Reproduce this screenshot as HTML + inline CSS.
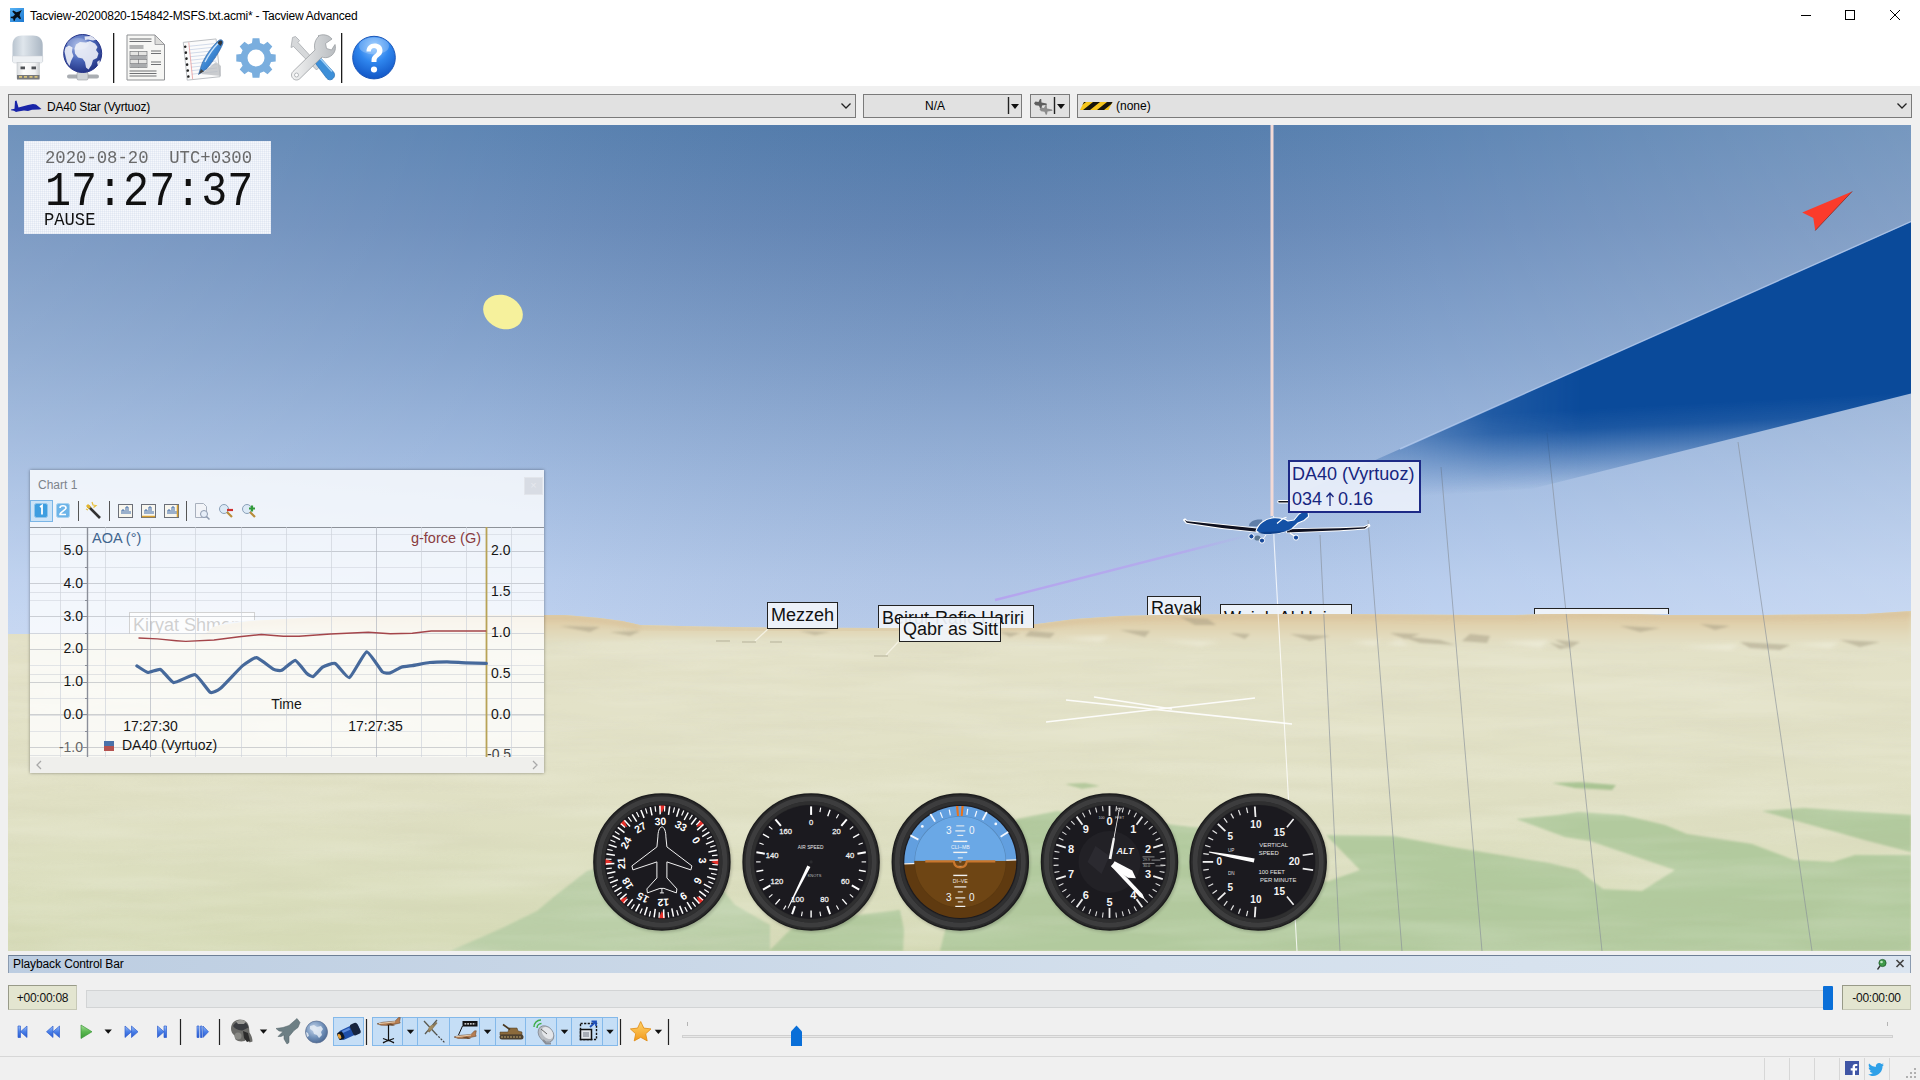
<!DOCTYPE html>
<html>
<head>
<meta charset="utf-8">
<title>Tacview</title>
<style>
*{box-sizing:border-box;margin:0;padding:0}
html,body{width:1920px;height:1080px;overflow:hidden;background:#f0f0f0;font-family:"Liberation Sans",sans-serif;color:#000}
body{position:relative}
.abs{position:absolute}
#titlebar{position:absolute;left:0;top:0;width:1920px;height:30px;background:#fff}
#title{position:absolute;left:30px;top:9px;font-size:12px;line-height:14px;white-space:nowrap;color:#000;letter-spacing:-.22px}
#toolbar{position:absolute;left:0;top:30px;width:1920px;height:56px;background:#fff}
.tsep{position:absolute;top:3px;width:1px;height:50px;background:#2a2a2a}
#combos{position:absolute;left:0;top:86px;width:1920px;height:39px;background:#f0f0f0}
.combo{position:absolute;top:8px;height:24px;border:1px solid #7a7a7a;background:#e1e1e1;font-size:12px;line-height:22px;white-space:nowrap}
#view{position:absolute;left:8px;top:125px;width:1903px;height:826px;overflow:hidden;background:#89a8d2}
#view>svg{position:absolute;left:0;top:0}
.lbl{position:absolute;border:1px solid #222;background:rgba(240,244,250,.93);color:#111;font-size:18px;line-height:22px;white-space:nowrap;padding:0 3px;overflow:hidden}
#timebox{position:absolute;left:24px;top:141px;width:247px;height:93px;background:#f6f8fc;overflow:hidden}
#chart{position:absolute;left:30px;top:470px;width:514px;height:303px;background:rgba(255,255,255,.8);box-shadow:0 0 3px rgba(0,0,0,.4);overflow:hidden}
.mono{font-family:"Liberation Mono",monospace;white-space:nowrap;transform-origin:0 0}
.cl{position:absolute;font-size:14px;line-height:16px;white-space:nowrap;color:#151515}
#pbhead{position:absolute;left:8px;top:955px;width:1903px;height:18px;background:linear-gradient(90deg,#bccde1,#d3dfec 60%,#dbe5f0);border-top:1px solid #6d7f96;border-left:1px solid #8b9bb0;border-right:1px solid #8b9bb0;font-size:12px;line-height:16px;padding-left:4px;letter-spacing:-.1px}
.tbox{position:absolute;top:985px;height:25px;background:#e3e5d0;border:1px solid;border-color:#989a88 #c6c8b6 #c6c8b6 #989a88;font-size:12px;line-height:25px;text-align:center;color:#111;letter-spacing:-.25px}
#track{position:absolute;left:86px;top:990px;width:1741px;height:18px;background:#e5e7e8;border:1px solid #d2d4d5}
#status{position:absolute;left:0;top:1056px;width:1920px;height:24px;background:#f0f0f0;border-top:1px solid #d7d7d7}
</style>
</head>
<body>
<div id="titlebar">
  <svg class="abs" style="left:10px;top:8px" width="14" height="14" viewBox="0 0 14 14"><defs><linearGradient id="ai" x1="0" y1="0" x2="1" y2="1"><stop offset="0" stop-color="#58b4f6"/><stop offset="1" stop-color="#1c78d0"/></linearGradient></defs><rect width="14" height="14" fill="url(#ai)"/><path d="M11.9 2 L9 3.4 L6.5 4.2 L3.2 2.6 L2.3 3.6 L5 6.5 L3 8.5 L.8 8.7 L.8 10.1 L3.2 10.5 L3.6 12.7 L4.900 12.7 L5.3 10.7 L7.3 8.900 L10 11.2 L11 10.5 L9.6 7.3 L10.4 4.800Z" fill="#061018"/></svg>
  <div id="title">Tacview-20200820-154842-MSFS.txt.acmi* - Tacview Advanced</div>
  <svg class="abs" style="left:1790px;top:0" width="130" height="30" viewBox="0 0 130 30" fill="none" stroke="#000" stroke-width="1"><path d="M11 15.5h10"/><rect x="55.5" y="10.5" width="9" height="9"/><path d="M100 10l10 10M110 10l-10 10"/></svg>
</div>
<div id="toolbar"><svg class="abs" style="left:0;top:0" width="420" height="56" viewBox="0 30 420 56">
<defs>
<linearGradient id="usbc" x1="0" y1="0" x2="1" y2="0"><stop offset="0" stop-color="#b9c4cf"/><stop offset=".35" stop-color="#dfe6ec"/><stop offset="1" stop-color="#aab6c3"/></linearGradient>
<linearGradient id="usbb" x1="0" y1="0" x2="1" y2="0"><stop offset="0" stop-color="#d9dcdf"/><stop offset=".3" stop-color="#fdfdfd"/><stop offset=".8" stop-color="#f0f1f2"/><stop offset="1" stop-color="#c8cbce"/></linearGradient>
<radialGradient id="glb" cx=".4" cy=".3" r=".75"><stop offset="0" stop-color="#9fb3e6"/><stop offset=".5" stop-color="#4a66b8"/><stop offset="1" stop-color="#1f2f80"/></radialGradient>
<radialGradient id="hlp" cx=".5" cy=".25" r=".8"><stop offset="0" stop-color="#8cc4ff"/><stop offset=".45" stop-color="#2f86ee"/><stop offset="1" stop-color="#0d4fc0"/></radialGradient>
<linearGradient id="pen" x1="0" y1="0" x2="1" y2="1"><stop offset="0" stop-color="#8fc6f2"/><stop offset=".5" stop-color="#3c86d2"/><stop offset="1" stop-color="#1d5aa6"/></linearGradient>
<linearGradient id="wr" x1="0" y1="0" x2="1" y2="0"><stop offset="0" stop-color="#f4f4f4"/><stop offset="1" stop-color="#b8bcc0"/></linearGradient>
</defs>
<!-- usb -->
<path d="M12.5 61.5 V45 C12.5 38.5 16.5 35.5 22 35.5 H33 C38.5 35.5 42.7 38.5 42.7 45 V61.5Z" fill="url(#usbc)"/>
<path d="M12.5 56 H42.7 V61 C42.7 62.5 41.5 63 40 63 H15 C13.5 63 12.5 62.5 12.5 61Z" fill="#eef1f4" stroke="#c9ced4" stroke-width=".5"/>
<rect x="17" y="62.5" width="22.5" height="16" fill="url(#usbb)" stroke="#c4c8cc" stroke-width=".6"/>
<rect x="20.5" y="66.5" width="4.5" height="2.8" fill="#4f5256"/><rect x="31.5" y="66.5" width="4.5" height="2.8" fill="#4f5256"/>
<rect x="17" y="75" width="22.5" height="4.5" fill="#77797c"/><path d="M19 76.8h3M24 76.8h3M29.5 76.8h3M34.5 76.8h3" stroke="#d8c27a" stroke-width="1.8"/>
<!-- globe -->
<path d="M79 78 v-6 h7 v6 M69 76.5 h28" stroke="#a9adb2" stroke-width="4" fill="none" stroke-linecap="round"/>
<rect x="77" y="72" width="11" height="8" rx="1.5" fill="#cfd3d7" stroke="#9a9ea3" stroke-width=".6"/>
<circle cx="82.7" cy="53.5" r="19" fill="url(#glb)" stroke="#27358a" stroke-width="1"/>
<path d="M76 44.5 L80 42 L86 42.5 L90 41 L95 43.5 L97.5 47 L96 50 L98.5 53.5 L97 58 L93 60 L91.5 65 L88.5 69.5 L86 67.5 L85 62 L82.5 58.5 L78 57.5 L75 53.5 L74.5 48.5Z M84.5 36.5 L91 36 L96.5 39.5 L93 40.5 L88 39.5 L85 40Z M65.5 47.5 L69 45.5 L72.5 47.5 L72 52 L73.5 56 L71 61 L69.5 66 L67 62 L65.5 56 L64.5 51.5Z M97 62 L99.5 60 L100 64 L98 66Z" fill="#eef1f8" opacity=".9"/>
<ellipse cx="78" cy="44" rx="11" ry="6" fill="#fff" opacity=".18"/>
<!-- sep -->
<rect x="113" y="33" width="1.3" height="50" fill="#1c1c1c"/><rect x="341" y="33" width="1.3" height="50" fill="#1c1c1c"/>
<!-- doc -->
<path d="M127 35 H155 L164.5 44.5 V80 H127Z" fill="#f6f6f4" stroke="#8f9194" stroke-width="1"/>
<path d="M155 35 V44.5 H164.5Z" fill="#dcdcda" stroke="#8f9194" stroke-width=".8"/>
<g stroke="#6e7073" stroke-width="1.1"><path d="M129.5 39h22M129.5 41.5h22M129.5 46h14M129.5 48h14M129.5 71h27M129.5 73.5h27M129.5 76h27M151 51h10M151 53.5h10M151 62h10M151 64.5h10"/></g>
<rect x="130" y="51.5" width="17" height="16" fill="#e4e4e2" stroke="#77797c" stroke-width=".7"/><path d="M130 55.5h17M130 59.5h17M130 63.5h17M138.5 51.5v16" stroke="#77797c" stroke-width=".7"/>
<rect x="130.5" y="56" width="16" height="3" fill="#a9abad"/><rect x="130.5" y="64" width="16" height="3" fill="#a9abad"/>
<!-- notepad -->
<g transform="rotate(-6 202 58)">
<rect x="185" y="40.5" width="33" height="38" fill="#fbfbfb" stroke="#b9bcc0" stroke-width=".9"/>
<path d="M190 45h26M190 48.5h26M190 52h26M190 55.5h26M190 59h26M190 62.5h26M190 66h26M190 69.5h26M190 73h26" stroke="#c9d4e6" stroke-width=".8"/>
<path d="M190.5 41v37" stroke="#e9a0a0" stroke-width=".8"/>
<g fill="#222"><circle cx="186.5" cy="45" r="1.3"/><circle cx="186.5" cy="51" r="1.3"/><circle cx="186.5" cy="57" r="1.3"/><circle cx="186.5" cy="63" r="1.3"/><circle cx="186.5" cy="69" r="1.3"/><circle cx="186.5" cy="75" r="1.3"/></g>
</g>
<path d="M201 74 L216 62 L221 66 L221 76 Z" fill="#b9bcc0" opacity=".75"/>
<path d="M198.5 74.5 L202 63.5 C207 53 213.5 45 218.5 40.5 C221 38.5 224 40.5 222.8 43.8 C220 51 214 60 207 68.5Z" fill="url(#pen)" stroke="#2b5e9e" stroke-width=".6"/><path d="M205 62 C209 54 214 47.5 218.5 43" stroke="#cfe6fa" stroke-width="1.3" fill="none"/>
<path d="M219 41 C221 39.5 223 41 222 43.5 L220.5 46 L217.5 43Z" fill="#33363b"/>
<path d="M199 74 l2 -5 l3 2.5z" fill="#444"/>
<!-- gear -->
<path d="M252.0 43.0 L252.6 38.3 L259.4 38.3 L260.0 43.0 L263.8 44.6 L267.5 41.7 L272.3 46.5 L269.4 50.2 L271.0 54.0 L275.7 54.6 L275.7 61.4 L271.0 62.0 L269.4 65.8 L272.3 69.5 L267.5 74.3 L263.8 71.4 L260.0 73.0 L259.4 77.7 L252.6 77.7 L252.0 73.0 L248.2 71.4 L244.5 74.3 L239.7 69.5 L242.6 65.8 L241.0 62.0 L236.3 61.4 L236.3 54.6 L241.0 54.0 L242.6 50.2 L239.7 46.5 L244.5 41.7 L248.2 44.6Z M247.5 58.0 a8.5 8.5 0 1 0 17.0 0 a8.5 8.5 0 1 0 -17.0 0Z" fill="#7aaede" fill-rule="evenodd"/>
<!-- tools -->
<path d="M292.5 37.5 l3 -1 l4 4 l-1.5 2 l22 24 l-3.5 3.5 l-23 -23.5 l-2.5 1 z" fill="#d6d8da" stroke="#9fa3a7" stroke-width=".7"/>
<path d="M313 60 l5 -5 l15.5 17 c2 2.5 1 5.5 -1 7 c-2 1.5 -4.5 1 -6 -1z" fill="#3d8fd8" stroke="#2a6fb0" stroke-width=".7"/>
<path d="M316 58 l2 -2 l14 15.5" stroke="#9ccdf5" stroke-width="1.5" fill="none"/>
<path d="M318 36 c5 -2.5 11 -1 14 3 l-6.5 4.5 l1 5 l5 1.5 l3.5 -5.5 c1.5 5 -1 10.5 -6 12.5 c-2.5 1 -5 .8 -7 0 l-22 21.5 c-2 2 -5 2 -7 0 c-2 -2 -2 -5 0 -7 l22 -21.5 c-1.5 -5.5 .5 -11 4 -14z" fill="url(#wr)" stroke="#9a9ea2" stroke-width=".8"/>
<circle cx="296.5" cy="75" r="2" fill="#fff" stroke="#9a9ea2" stroke-width=".7"/>
<!-- help -->
<circle cx="374" cy="57.6" r="21.3" fill="url(#hlp)" stroke="#1a56b8" stroke-width="1"/>
<ellipse cx="374" cy="46" rx="15" ry="8.5" fill="#fff" opacity=".22"/>
<path d="M366.5 51.5 c0 -5 3.5 -8 8 -8 c4.5 0 8 2.5 8 7 c0 3.5 -2 5 -4 6.5 c-1.5 1.200 -2 2 -2 4 v1 h-5 v-1.5 c0 -3 1 -4.5 3 -6 c1.5 -1.200 2.5 -2 2.5 -3.800 c0 -1.800 -1.200 -2.800 -3 -2.800 c-2 0 -3 1.3 -3.200 3.6z" fill="#fff"/>
<ellipse cx="374" cy="69.5" rx="3.1" ry="3" fill="#fff"/>
</svg>
</div>
<div id="combos"><div class="combo" style="left:8px;width:848px"></div>
<svg class="abs" style="left:8px;top:9px" width="36" height="20" viewBox="0 0 36 20"><path d="M3 14.5 L6.5 13.800 L7 6 L8.5 5.5 L10.5 12.5 L20 10 L25 9 L28 9.5 L33.5 14 L31 14.5 L24 14.800 L20 16 L16 15.5 L10 16.5 L8 17 L6 15.800 L3 15.3Z" fill="#1824a8"/></svg>
<div class="abs" style="left:47px;top:14px;font-size:12px;line-height:14px;white-space:nowrap;letter-spacing:-.2px">DA40 Star (Vyrtuoz)</div>
<svg class="abs" style="left:840px;top:16px" width="12" height="8" viewBox="0 0 12 8"><path d="M1.5 1.5l4.5 4.5 4.5-4.5" fill="none" stroke="#222" stroke-width="1.3"/></svg>
<div class="combo" style="left:863px;width:159px"></div>
<div class="abs" style="left:863px;top:13px;width:144px;text-align:center;font-size:12px;line-height:14px">N/A</div>
<svg class="abs" style="left:1004px;top:10px" width="18" height="20" viewBox="0 0 18 20"><path d="M4.5 1v17" stroke="#222" stroke-width="1.4"/><path d="M7 8h8l-4 5z" fill="#111"/></svg>
<div class="combo" style="left:1030px;width:40px"></div>
<svg class="abs" style="left:1032px;top:10px" width="38" height="20" viewBox="0 0 38 20"><path d="M3.5 5.5l3 .5 1.5-3 1.2 0 .3 3.5 5 1 .5 1.2-5 .8-.5 3-1.2.2-1.300-3-3.5-.5-1.5-2z" fill="#5e5e5e"/><path d="M9 11.5l3 .5 1.5-3 1.2 0 .3 3.5 5 1 .5 1.2-5 .8-.5 3-1.2.2-1.300-3-3.5-.5-1.5-2z" fill="#8c8c8c"/><path d="M22.5 1v17" stroke="#222" stroke-width="1.4"/><path d="M25 8h8l-4 5z" fill="#111"/></svg>
<div class="combo" style="left:1077px;width:835px"></div>
<svg class="abs" style="left:1078px;top:14px" width="38" height="12" viewBox="1078 100 38 12"><clipPath id="hz"><path d="M1084 102h28.5l-4 8h-28.5z"/></clipPath><g clip-path="url(#hz)"><rect x="1078" y="100" width="38" height="12" fill="#f4c41c"/><path d="M1093 102h7l-10 8h-7zM1107 102h7l-10 8h-7zM1079 102h7l-10 8h-7z" fill="#16140c"/></g></svg>
<div class="abs" style="left:1116px;top:13px;font-size:12px;line-height:14px">(none)</div>
<svg class="abs" style="left:1896px;top:16px" width="12" height="8" viewBox="0 0 12 8"><path d="M1.5 1.5l4.5 4.5 4.5-4.5" fill="none" stroke="#222" stroke-width="1.3"/></svg>
</div>
<div id="view"><svg width="1903" height="826" viewBox="8 125 1903 826">
<defs>
<linearGradient id="sky" x1="0" y1="125" x2="0" y2="630" gradientUnits="userSpaceOnUse">
<stop offset="0" stop-color="#547eaf"/><stop offset=".2" stop-color="#6689b9"/><stop offset=".45" stop-color="#7f9fcb"/><stop offset=".7" stop-color="#9db8df"/><stop offset=".9" stop-color="#b4caec"/><stop offset="1" stop-color="#bcd0f0"/>
</linearGradient>
<linearGradient id="skyh" x1="8" y1="0" x2="1911" y2="0" gradientUnits="userSpaceOnUse">
<stop offset="0" stop-color="#fff" stop-opacity=".16"/><stop offset=".25" stop-color="#fff" stop-opacity=".06"/><stop offset=".5" stop-color="#000" stop-opacity=".03"/><stop offset=".75" stop-color="#fff" stop-opacity=".06"/><stop offset="1" stop-color="#fff" stop-opacity=".2"/>
</linearGradient>
<linearGradient id="gnd" x1="0" y1="610" x2="0" y2="951" gradientUnits="userSpaceOnUse">
<stop offset="0" stop-color="#e0dabd"/><stop offset=".09" stop-color="#e3e1c7"/><stop offset=".3" stop-color="#e3e2c8"/><stop offset=".55" stop-color="#e0e0c4"/><stop offset=".8" stop-color="#dbdebe"/><stop offset="1" stop-color="#d5dab6"/>
</linearGradient>
<linearGradient id="mtn" x1="0" y1="612" x2="0" y2="654" gradientUnits="userSpaceOnUse">
<stop offset="0" stop-color="#dfc9a2"/><stop offset=".3" stop-color="#e0d1ad"/><stop offset=".65" stop-color="#e2dbbe" stop-opacity=".7"/><stop offset="1" stop-color="#e3e1c7" stop-opacity="0"/>
</linearGradient>
<linearGradient id="trail" x1="1533" y1="412" x2="1537" y2="490" gradientUnits="userSpaceOnUse">
<stop offset="0" stop-color="#0a4a9a"/><stop offset=".25" stop-color="#0a4a9a" stop-opacity=".88"/><stop offset=".6" stop-color="#0a4a9a" stop-opacity=".45"/><stop offset="1" stop-color="#0a4a9a" stop-opacity="0"/>
</linearGradient>
<filter id="tex" x="0" y="0" width="100%" height="100%"><feTurbulence type="fractalNoise" baseFrequency="0.006 0.06" numOctaves="3" seed="7"/><feColorMatrix type="matrix" values="0 0 0 0 0.45  0 0 0 0 0.42  0 0 0 0 0.30  1.6 0 0 0 -0.62"/></filter>
<filter id="tex2" x="0" y="0" width="100%" height="100%"><feTurbulence type="fractalNoise" baseFrequency="0.005 0.05" numOctaves="3" seed="23"/><feColorMatrix type="matrix" values="0 0 0 0 1  0 0 0 0 1  0 0 0 0 0.95  0 1.6 0 0 -0.62"/></filter>
<filter id="b2"><feGaussianBlur stdDeviation="2"/></filter>
<filter id="b4" x="-5%" y="-100%" width="110%" height="300%"><feGaussianBlur stdDeviation="6"/></filter>
<filter id="b1"><feGaussianBlur stdDeviation="0.8"/></filter>
</defs>
<rect x="8" y="125" width="1903" height="520" fill="url(#sky)"/>
<rect x="8" y="125" width="1903" height="520" fill="url(#skyh)"/>
<!-- ground -->
<clipPath id="gclip"><path d="M8 634 L200 634 L215 626 L250 621 L320 617 L420 615 L540 615 L565 615 L600 618 L622 621 L640 625 L700 626.5 L765 627.5 L877 628 L950 627 L1000 625 L1037 624 L1075 619 L1120 616 L1160 615 L1200 614.5 L1250 614 L1350 614 L1475 615 L1515 615 L1590 612.5 L1665 615 L1765 615 L1865 614 L1911 611 V951 H8Z"/></clipPath>
<path d="M8 634 L200 634 L215 626 L250 621 L320 617 L420 615 L540 615 L565 615 L600 618 L622 621 L640 625 L700 626.5 L765 627.5 L877 628 L950 627 L1000 625 L1037 624 L1075 619 L1120 616 L1160 615 L1200 614.5 L1250 614 L1350 614 L1475 615 L1515 615 L1590 612.5 L1665 615 L1765 615 L1865 614 L1911 611 V951 H8Z" fill="url(#gnd)"/>
<g filter="url(#b1)" fill="#b2ca9e">
<path d="M450 951 L500 929 L537 911 L556 895 L587 871 L620 862 L700 862 L735 905 L770 925 L770 951Z" fill="#bbcfa8"/>
<path d="M769 951 L790 930 L806 923 L850 916 L900 910 L904 930 L903 951Z"/>
<path d="M940 951 L955 890 L985 850 L1017 819 L1057 811 L1191 827 L1300 832 L1300 884 L1329 881 L1360 870 L1326 835 L1394 836 L1452 847 L1549 863 L1578 870 L1603 889 L1642 891 L1675 870 L1590 841 L1565 837 L1516 819 L1558 815 L1578 812 L1623 815 L1665 825 L1687 834 L1752 844 L1794 860 L1833 862 L1855 855 L1911 855 L1911 951Z"/>
<path d="M1762 811 L1804 808 L1911 815 L1911 852 L1868 841Z"/>
<path d="M1552 783 L1580 782 L1616 785 L1612 790 L1575 788Z" fill="#a9c493"/>
<path d="M1065 784 L1085 783 L1100 786 L1082 789Z" fill="#b4c99c"/>
</g>

<g clip-path="url(#gclip)"><rect x="8" y="640" width="1903" height="311" filter="url(#tex)" opacity=".09"/><rect x="8" y="640" width="1903" height="311" filter="url(#tex2)" opacity=".2"/></g>
<g clip-path="url(#gclip)">
<path d="M200 634 L215 626 L250 621 L320 617 L420 615 L540 615 L565 615 L600 618 L622 621 L640 625 L700 626.5 L765 627.5 L877 628 L950 627 L1000 625 L1037 624 L1075 619 L1120 616 L1160 615 L1200 614.5 L1250 614 L1350 614 L1475 615 L1515 615 L1590 612.5 L1665 615 L1765 615 L1865 614 L1911 611 L1911 654 L1700 654 L1500 652 L1300 650 L1150 648 L1075 644 L1000 639 L950 637 L800 637 L660 637 L620 640 L540 641 L420 641 L320 641 L250 640 L215 638 L200 636Z" fill="url(#mtn)" filter="url(#b2)"/>
<g filter="url(#b2)" fill="none" stroke="#d9c29b" stroke-width="6" opacity=".75"><path d="M200 636 L215 628 L250 623 L320 619 L420 617 L540 617 L565 617 L600 620 L622 623 L640 627"/><path d="M1000 627 L1037 626 L1075 621 L1120 618 L1160 617 L1200 616.5 L1250 616 L1350 616 L1475 617 L1515 617 L1590 614.5 L1665 617 L1765 617 L1865 616 L1911 613"/></g>
<g filter="url(#b2)" fill="none" stroke="#dbc7a2" stroke-width="5" opacity=".75"><path d="M622 622.5 L640 626.5 L700 628 L765 629 L877 629.5 L950 628.5 L1000 626.5 L1037 625.5"/></g>
<g filter="url(#b1)" fill="#9f967e" opacity=".45">
<path d="M1180 617 L1208 619 L1216 625 L1195 625Z"/><path d="M1030 631 L1055 633 L1050 638 L1025 636Z"/>
<path d="M1120 630 L1150 631 L1145 637Z"/><path d="M1230 633 L1250 634 L1245 639Z"/><path d="M1290 634 L1330 636 L1310 641Z"/>
<path d="M1390 633 L1420 634 L1405 639Z"/><path d="M1470 634 L1490 636 L1487 643 L1462 641Z"/><path d="M1555 640 L1580 642 L1570 648Z"/>
<path d="M1620 626 L1660 628 L1640 632Z"/><path d="M1700 624 L1730 626 L1715 630Z"/><path d="M1740 642 L1790 645 L1780 650 L1750 648Z"/><path d="M1840 640 L1880 642 L1860 647Z"/>
<path d="M560 626 L600 627 L590 632Z"/><path d="M610 632 L640 631 L630 636Z"/><path d="M800 631 L830 632 L815 635Z"/><path d="M1000 632 L1020 633 L1010 637Z"/>
<path d="M1400 636 L1440 640 L1455 645 L1420 643Z"/><path d="M1550 643 L1570 647 L1560 649Z"/>
</g>
<g filter="url(#b2)" fill="#f0efdd" opacity=".7">
<path d="M1060 638 L1110 636 L1100 642Z"/><path d="M1160 640 L1220 642 L1200 646Z"/><path d="M1350 642 L1380 640 L1375 646Z"/><path d="M1500 642 L1550 640 L1540 648Z"/><path d="M1680 646 L1740 644 L1730 650Z"/><path d="M1790 644 L1840 642 L1830 648Z"/><path d="M1385 644 L1400 640 L1410 646Z"/>
</g>
</g>
<g>
<g stroke="#868e98" stroke-width="1" opacity=".62" fill="none">
<path d="M1320 535 L1340 951"/><path d="M1368 520 L1402 951"/><path d="M1441 467 L1482 951"/><path d="M1547 433 L1602 951"/><path d="M1738 442 L1812 951"/>
</g>
<linearGradient id="tmg" x1="1290" y1="0" x2="1580" y2="0" gradientUnits="userSpaceOnUse"><stop offset="0" stop-color="#fff" stop-opacity=".2"/><stop offset=".4" stop-color="#fff" stop-opacity=".5"/><stop offset=".7" stop-color="#fff" stop-opacity=".85"/><stop offset="1" stop-color="#fff" stop-opacity="1"/></linearGradient><mask id="tm" maskUnits="userSpaceOnUse" x="1280" y="200" width="640" height="320"><rect x="1280" y="200" width="640" height="320" fill="url(#tmg)"/></mask>
<path d="M1290 498 L1911 222 L1911 393.5 L1533 488.5 L1290 505Z" fill="url(#trail)" mask="url(#tm)"/>
</g>
<ellipse cx="503" cy="312" rx="20.5" ry="16.5" transform="rotate(25 503 312)" fill="#f6f19c"/>
<path d="M1802.2 212.6 L1852.2 191.4 L1815.2 230.6 L1813.3 218.1Z" fill="#fb3b2b"/>
<path d="M1852.2 191.4 L1815.2 230.6" stroke="#7a2a24" stroke-width=".9" opacity=".8"/>
<path d="M1400 449 L1911 221.6" stroke="#b7cdf0" stroke-width="1.4" opacity=".75"/>
<rect x="1270.5" y="125" width="3" height="391" fill="#f3dad6"/>
<path d="M1273.6 516 L1274 540 L1297 951" stroke="#fff" stroke-width="1.1" opacity=".8" fill="none"/>
<linearGradient id="vio" x1="995" y1="0" x2="1250" y2="0" gradientUnits="userSpaceOnUse"><stop offset="0" stop-color="#b5a3ef" stop-opacity=".95"/><stop offset=".75" stop-color="#b5a3ef" stop-opacity=".7"/><stop offset="1" stop-color="#b5a3ef" stop-opacity="0"/></linearGradient>
<path d="M1250 535 L995 600" stroke="url(#vio)" stroke-width="2.4"/>
<g id="aircraft">
<path d="M1279 501.7 L1290 501.7" stroke="#fff" stroke-width="3.4" stroke-linecap="round"/><path d="M1279 501.7 L1290 501.7" stroke="#15161c" stroke-width="1.6" stroke-linecap="round"/>
<path d="M1183.8 520 L1185 519.2 L1187 521 L1257 528.6 L1257 531.8 L1222 528.2 L1186.5 523Z" fill="#fff" stroke="#fff" stroke-width="1.6" stroke-linejoin="round"/>
<path d="M1184.5 519.8 L1187 521.2 L1257 528.6 L1257 531.8 L1222 528 L1186.8 522.8Z" fill="#0e1020"/>
<path d="M1287 529.2 L1340 528 L1364 527 L1369 524.6 L1369.6 525.8 L1365 528.6 L1340 530.4 L1287 532.4Z" fill="#fff" stroke="#fff" stroke-width="1.6" stroke-linejoin="round"/>
<path d="M1287 529.2 L1340 528.2 L1364 527.2 L1368.6 525.2 L1365 528.6 L1340 530.2 L1287 532.4Z" fill="#0e1020"/>
<path d="M1249 526 C1249.5 521.5 1254 519 1262 519.5 L1264 527Z" fill="#5f7ea8"/>
<path d="M1256 531 C1258 524 1265 518.4 1274 517.8 C1280 517.6 1285 519 1288 521 L1294 520 L1299 514 L1303 511.6 L1308 511.8 L1308.6 516.5 L1304 520.5 L1298 523 L1292 528.6 C1284 534 1262 535.6 1256 531Z" fill="#1351a6" stroke="#fff" stroke-width="1.1" stroke-linejoin="round"/>
<path d="M1277 523.5 L1283 518.6 L1286.5 517.2" stroke="#fff" stroke-width="1.2" fill="none"/>
<path d="M1262 532 L1286 531 L1292 528.6 C1284 534 1264 535.6 1258 532.6Z" fill="#0c3f8a"/>
<ellipse cx="1257.5" cy="538" rx="3" ry="2.6" fill="#5c7792"/>
<circle cx="1251.4" cy="536.4" r="2.6" fill="#17499a" stroke="#fff" stroke-width="1"/>
<circle cx="1262" cy="540.6" r="2.6" fill="#17499a" stroke="#fff" stroke-width="1"/>
<path d="M1290 533 L1295 536.5" stroke="#fff" stroke-width="1.2"/><path d="M1266 535 L1263 539" stroke="#fff" stroke-width="1"/>
<circle cx="1296" cy="537.6" r="2.6" fill="#17499a" stroke="#fff" stroke-width="1"/>
</g>
<g stroke="#fff" stroke-width="1.6" opacity=".9"><path d="M1066 700 L1292 724"/><path d="M1094 697 L1172 709"/><path d="M1046 722 L1255 698"/></g>
<g stroke="#f4f1e2" stroke-width="1.3"><path d="M768 629 L755 641"/><path d="M899 641 L886 655"/></g>
<g stroke="#a9a58e" stroke-width="1" opacity=".8"><path d="M716 641 h14 M742 642 h14 M770 642 h12 M874 656 h14"/></g>

</svg>
<div class="lbl" style="left:759px;top:477px;width:71px;height:27px;line-height:25px">Mezzeh</div>
<div class="lbl" style="left:870px;top:480px;width:156px;height:23px;line-height:24px;border-bottom:none">Beirut-Rafic Hariri</div>
<div class="lbl" style="left:891px;top:492px;width:102px;height:25px;line-height:23px">Qabr as Sitt</div>
<div class="lbl" style="left:1139px;top:471px;width:54px;height:19px;line-height:23px;border-bottom:none">Rayak</div>
<div class="lbl" style="left:1212px;top:479px;width:132px;height:10px;line-height:26px;border-bottom:none">Wujah Al Hajar</div>
<div class="lbl" style="left:1526px;top:483px;width:135px;height:6px;line-height:30px;border-bottom:none">Al Qusayr&nbsp;&nbsp;&nbsp;&nbsp;&nbsp;&nbsp;&nbsp;&nbsp;&nbsp;l</div>
<div class="lbl" style="left:121px;top:487px;width:126px;height:22px;line-height:24px;border-bottom:none;clip-path:polygon(0 0,126px 0,126px 8px,100px 10px,84px 15px,76px 22px,0 22px)">Kiryat Shmona</div>
<div class="abs" style="left:1280px;top:335px;width:133px;height:53px;border:2px solid #1d2a86;background:rgba(238,243,252,.88);color:#17267f;font-size:18px;line-height:25px;padding-left:2px;white-space:nowrap">DA40 (Vyrtuoz)<br>034<svg width="14" height="16" viewBox="0 0 13 16" style="vertical-align:-2px;margin:0 1px"><path d="M6.5 15V2.5M3 6l3.5-4 3.5 4" fill="none" stroke="#17267f" stroke-width="1.3"/></svg>0.16</div>

</div>
<div id="timebox"><div class="abs" style="left:0;top:0;width:247px;height:93px;background-image:linear-gradient(90deg,rgba(214,222,238,.38) 1px,transparent 1px),linear-gradient(rgba(214,222,238,.38) 1px,transparent 1px);background-size:2px 2px"></div>
<div class="abs mono" style="left:21px;top:6px;font-size:19px;line-height:22px;color:#6b6b6b;transform:scaleX(.908)">2020-08-20&nbsp;&nbsp;UTC+0300</div>
<div class="abs mono" style="left:21px;top:26px;font-size:48px;line-height:50px;color:#111;transform:scaleX(.904)">17:27:37</div>
<div class="abs mono" style="left:20px;top:69px;font-size:18.5px;line-height:22px;color:#111;transform:scaleX(.927)">PAUSE</div>
</div>
<div id="chart"><div class="abs" style="left:0;top:-1px;width:514px;height:304px"><div class="abs" style="left:8px;top:9px;font-size:12px;line-height:14px;color:#7d838b">Chart 1</div>
<div class="abs" style="left:494px;top:8px;width:19px;height:18px;background:#d8dce4;border:1px solid #e2e5eb;color:#e6e8ee;font-size:11px;line-height:15px;text-align:center">&#215;</div>
<div class="abs" style="left:0;top:31px;width:23px;height:22px;background:#cbe3f7;border:1px solid #7ab5e6"></div>
<svg class="abs" style="left:0;top:28px" width="240" height="28" viewBox="0 0 240 28">
<rect x="4.5" y="6.5" width="13" height="14" rx="2" fill="#3d9ee0" stroke="#8fc4ea"/><path d="M10 10l2-1.5v9" stroke="#fff" stroke-width="1.8" fill="none"/>
<rect x="26.5" y="6.5" width="13" height="14" rx="2" fill="#6db4e8" stroke="#a9d3f0"/><path d="M30 11c0-3 6-3 6 0c0 2-6 4-6 6.5h6" stroke="#fff" stroke-width="1.6" fill="none"/>
<path d="M48.5 4v20M79.5 4v20M156.5 4v20" stroke="#555"/>
<path d="M58 9l12 12" stroke="#333" stroke-width="2.6"/><path d="M57 8l3 3" stroke="#e3b52e" stroke-width="3"/><path d="M62 5l1 3 3 .5-2.5 2M56 12l2 1" stroke="#e8c03a" stroke-width="1.2" fill="none"/>
<g fill="#f8f6ee" stroke="#6b6f78"><rect x="88.5" y="7.5" width="14" height="13"/><rect x="111.5" y="7.5" width="14" height="13"/><rect x="134.5" y="7.5" width="14" height="13"/></g>
<g stroke="#3f6aa8" fill="none"><path d="M92 17v-4h2v4M96 17v-7h2v7M100 17v-3"/><path d="M115 17v-4h2v4M119 17v-7h2v7M123 17v-3"/><path d="M138 17v-4h2v4M142 17v-7h2v7M146 17v-3"/></g>
<path d="M112 19.5h13" stroke="#d8a030" stroke-width="1.5"/><path d="M147.5 8v12" stroke="#d8a030" stroke-width="1.5"/>
<path d="M165.5 6.5h8l3 3v11h-11z" fill="#f2f4f8" stroke="#a8b0bd"/><circle cx="174" cy="17" r="3.5" fill="#e6eef8" stroke="#8e9bb0"/><path d="M176.5 19.5l3 3" stroke="#8e9bb0" stroke-width="1.5"/>
<circle cx="194" cy="12" r="4.5" fill="#dceaf6" stroke="#8aa0b8"/><path d="M197 15l5 5" stroke="#b98d3a" stroke-width="2.2"/><path d="M197 13h6" stroke="#d03030" stroke-width="2.2"/>
<circle cx="217" cy="12" r="4.5" fill="#dceaf6" stroke="#8aa0b8"/><path d="M220 15l5 5" stroke="#b98d3a" stroke-width="2.2"/><path d="M219 11.5h6M222 8.5v6" stroke="#2f9a38" stroke-width="2.2"/>
</svg>
<svg class="abs" style="left:0;top:0" width="514" height="304" viewBox="0 0 514 304">
<path d="M0 58.5H514" stroke="#8d9299" stroke-width="1"/>
<path d="M0 65.5 H514" stroke="#ccd1da" stroke-width="1" opacity=".5"/>
<path d="M0 82.5 H514" stroke="#a4a8b0" stroke-width="1" opacity=".5"/>
<path d="M0 98.5 H514" stroke="#ccd1da" stroke-width="1" opacity=".5"/>
<path d="M0 114.5 H514" stroke="#a4a8b0" stroke-width="1" opacity=".5"/>
<path d="M0 131.5 H514" stroke="#ccd1da" stroke-width="1" opacity=".5"/>
<path d="M0 147.5 H514" stroke="#a4a8b0" stroke-width="1" opacity=".5"/>
<path d="M0 164.5 H514" stroke="#ccd1da" stroke-width="1" opacity=".5"/>
<path d="M0 180.5 H514" stroke="#a4a8b0" stroke-width="1" opacity=".5"/>
<path d="M0 196.5 H514" stroke="#ccd1da" stroke-width="1" opacity=".5"/>
<path d="M0 213.5 H514" stroke="#a4a8b0" stroke-width="1" opacity=".5"/>
<path d="M0 229.5 H514" stroke="#ccd1da" stroke-width="1" opacity=".5"/>
<path d="M0 245.5 H514" stroke="#a4a8b0" stroke-width="1" opacity=".5"/>
<path d="M0 262.5 H514" stroke="#ccd1da" stroke-width="1" opacity=".5"/>
<path d="M0 278.5 H514" stroke="#a4a8b0" stroke-width="1" opacity=".5"/>
<path d="M0 82.5 H514" stroke="#c4c8d0" stroke-width="1" opacity=".45"/>
<path d="M0 123.5 H514" stroke="#c4c8d0" stroke-width="1" opacity=".45"/>
<path d="M0 164.5 H514" stroke="#c4c8d0" stroke-width="1" opacity=".45"/>
<path d="M0 205.5 H514" stroke="#c4c8d0" stroke-width="1" opacity=".45"/>
<path d="M0 246.5 H514" stroke="#c4c8d0" stroke-width="1" opacity=".45"/>
<path d="M0 286.5 H514" stroke="#c4c8d0" stroke-width="1" opacity=".45"/>
<path d="M30.5 58 V288" stroke="#cdd2da" stroke-width="1" opacity=".65"/>
<path d="M75.5 58 V288" stroke="#cdd2da" stroke-width="1" opacity=".65"/>
<path d="M120.5 58 V288" stroke="#aeb3bd" stroke-width="1" opacity=".65"/>
<path d="M165.5 58 V288" stroke="#cdd2da" stroke-width="1" opacity=".65"/>
<path d="M211.5 58 V288" stroke="#cdd2da" stroke-width="1" opacity=".65"/>
<path d="M256.5 58 V288" stroke="#cdd2da" stroke-width="1" opacity=".65"/>
<path d="M301.5 58 V288" stroke="#cdd2da" stroke-width="1" opacity=".65"/>
<path d="M346.5 58 V288" stroke="#aeb3bd" stroke-width="1" opacity=".65"/>
<path d="M391.5 58 V288" stroke="#cdd2da" stroke-width="1" opacity=".65"/>
<path d="M436.5 58 V288" stroke="#cdd2da" stroke-width="1" opacity=".65"/>
<path d="M481.5 58 V288" stroke="#cdd2da" stroke-width="1" opacity=".65"/>
<path d="M57.5 58V288" stroke="#8b8f99" stroke-width="1.4"/>
<g stroke="#8b8f99" stroke-width="1"><path d="M53 82.5H57"/><path d="M55 98.5H57"/><path d="M53 114.5H57"/><path d="M55 131.5H57"/><path d="M53 147.5H57"/><path d="M55 164.5H57"/><path d="M53 180.5H57"/><path d="M55 196.5H57"/><path d="M53 213.5H57"/><path d="M55 229.5H57"/><path d="M53 245.5H57"/><path d="M55 262.5H57"/><path d="M53 278.5H57"/></g>
<path d="M456.5 58V288" stroke="#b8a356" stroke-width="1.8"/>
<path d="M108.5 169.0 L127.4 169.9 L146.3 171.7 L155.7 172.4 L184.0 171.0 L209.2 167.7 L231.3 165.5 L253.3 167.3 L269.0 167.3 L300.5 165.0 L338.3 163.2 L360.3 164.8 L382.3 164.2 L401.2 162.0 L456.3 162.0" stroke="#a4454a" stroke-width="1.4" fill="none" stroke-linejoin="round"/>
<path d="M106.9 196.9 C107.7 197.4 116.2 203.2 117.9 203.5 C119.6 203.8 128.6 199.7 130.5 200.4 C132.4 201.1 141.2 213.2 143.7 213.6 C146.2 214.0 162.5 205.0 165.2 205.7 C167.9 206.4 178.5 222.4 180.3 223.4 C182.1 224.4 187.9 221.5 190.3 219.6 C192.7 217.7 209.7 199.2 212.4 196.9 C215.1 194.6 224.2 188.4 226.5 188.7 C228.8 189.0 242.0 199.5 243.8 200.4 C245.6 201.3 250.1 202.0 251.7 201.3 C253.3 200.6 263.4 191.1 265.2 191.3 C267.0 191.5 275.6 203.3 276.9 204.5 C278.2 205.7 282.0 208.1 283.2 207.6 C284.4 207.1 291.0 199.2 292.6 198.2 C294.2 197.2 303.2 193.6 305.2 194.4 C307.2 195.2 317.1 209.5 319.4 208.6 C321.7 207.7 334.3 183.2 336.7 182.8 C339.1 182.4 350.7 201.4 352.4 202.9 C354.1 204.4 358.9 204.2 360.3 203.9 C361.7 203.6 369.7 198.7 371.3 198.2 C372.9 197.7 380.2 196.9 382.3 196.6 C384.4 196.3 397.1 193.8 399.6 193.5 C402.1 193.2 414.3 192.8 417.0 192.8 C419.7 192.8 432.9 193.7 435.8 193.8 C438.7 193.9 454.8 194.4 456.3 194.4" stroke="#46699b" stroke-width="3.2" fill="none" stroke-linejoin="round" stroke-linecap="round"/>
<rect x="74" y="272" width="10" height="5" fill="#4a72aa"/><rect x="74" y="277" width="10" height="5" fill="#b5524f"/>
</svg>
<div class="cl" style="left:62px;top:61px;color:#41658f;font-size:14.5px">AOA (&#176;)</div>
<div class="cl" style="right:63px;top:61px;color:#8a3c40;font-size:14.5px">g-force (G)</div>
<div class="cl" style="left:0;width:53px;text-align:right;top:73px">5.0</div>
<div class="cl" style="left:0;width:53px;text-align:right;top:106px">4.0</div>
<div class="cl" style="left:0;width:53px;text-align:right;top:139px">3.0</div>
<div class="cl" style="left:0;width:53px;text-align:right;top:171px">2.0</div>
<div class="cl" style="left:0;width:53px;text-align:right;top:204px">1.0</div>
<div class="cl" style="left:0;width:53px;text-align:right;top:237px">0.0</div>
<div class="cl" style="left:0;width:53px;text-align:right;top:270px;color:#666">-1.0</div>
<div class="cl" style="left:461px;top:73px">2.0</div>
<div class="cl" style="left:461px;top:114px">1.5</div>
<div class="cl" style="left:461px;top:155px">1.0</div>
<div class="cl" style="left:461px;top:196px">0.5</div>
<div class="cl" style="left:461px;top:237px">0.0</div>
<div class="cl" style="left:457px;top:277px;height:11px;overflow:hidden;color:#444">-0.5</div>
<div class="cl" style="left:80px;width:81px;text-align:center;top:249px">17:27:30</div>
<div class="cl" style="left:305px;width:81px;text-align:center;top:249px">17:27:35</div>
<div class="cl" style="left:216px;width:81px;text-align:center;top:227px">Time</div>
<div class="cl" style="left:92px;top:268px">DA40 (Vyrtuoz)</div>
<div class="abs" style="left:0;top:288px;width:514px;height:16px;background:#efefec"></div>
<svg class="abs" style="left:0;top:288px" width="514" height="16" viewBox="0 0 514 16" fill="none" stroke="#a8a8a8" stroke-width="1.3"><path d="M11 4l-4 4 4 4M503 4l4 4-4 4"/></svg>
</div></div>
<!--G0--><svg class="abs" style="left:580px;top:785px" width="760" height="155" viewBox="580 785 760 155" font-family="Liberation Sans, sans-serif" font-weight="bold" fill="#fff" text-anchor="middle">
<defs><filter id="gb"><feGaussianBlur stdDeviation="1.5"/></filter></defs>
<circle cx="662.9" cy="863.4" r="69" fill="#000" opacity=".18" filter="url(#gb)"/>
<circle cx="812.1" cy="863.4" r="69" fill="#000" opacity=".18" filter="url(#gb)"/>
<circle cx="961.3" cy="863.4" r="69" fill="#000" opacity=".18" filter="url(#gb)"/>
<circle cx="1110.5" cy="863.4" r="69" fill="#000" opacity=".18" filter="url(#gb)"/>
<circle cx="1259.2" cy="863.4" r="69" fill="#000" opacity=".18" filter="url(#gb)"/>
<circle cx="661.9" cy="861.9" r="68" fill="#2a2a2b"/><circle cx="661.9" cy="861.9" r="68" fill="none" stroke="#1c1c1d" stroke-width="1.5"/><circle cx="661.9" cy="861.9" r="63" fill="none" stroke="#3d3d3e" stroke-width="5"/><circle cx="661.9" cy="861.9" r="59" fill="none" stroke="#2f2f30" stroke-width="3"/><circle cx="661.9" cy="861.9" r="57" fill="#1b1a1f"/>
<path d="M658.7 805.5L665.1 805.5L661.9 812.9Z" fill="#e8302a"/>
<path d="M699.6 819.8L704.0 824.2L696.5 827.3Z" fill="#e8302a"/>
<path d="M718.3 858.7L718.3 865.1L710.9 861.9Z" fill="#e8302a"/>
<path d="M704.0 899.6L699.6 904.0L696.5 896.5Z" fill="#e8302a"/>
<path d="M665.1 918.3L658.7 918.3L661.9 910.9Z" fill="#e8302a"/>
<path d="M624.2 904.0L619.8 899.6L627.3 896.5Z" fill="#e8302a"/>
<path d="M605.5 865.1L605.5 858.7L612.9 861.9Z" fill="#e8302a"/>
<path d="M619.8 824.2L624.2 819.8L627.3 827.3Z" fill="#e8302a"/>
<path d="M660.2 814.4L659.9 805.9" stroke="#fff" stroke-width="1.5"/>
<path d="M664.5 811.5L664.8 806.0" stroke="#fff" stroke-width="1.2"/>
<path d="M668.5 814.9L669.7 806.4" stroke="#fff" stroke-width="1.5"/>
<path d="M673.3 812.7L674.5 807.3" stroke="#fff" stroke-width="1.2"/>
<path d="M676.6 816.7L679.2 808.6" stroke="#fff" stroke-width="1.5"/>
<path d="M681.6 815.4L683.8 810.4" stroke="#fff" stroke-width="1.2"/>
<path d="M684.2 820.0L688.2 812.5" stroke="#fff" stroke-width="1.5"/>
<path d="M689.4 819.5L692.4 814.9" stroke="#fff" stroke-width="1.2"/>
<path d="M691.1 824.5L696.4 817.8" stroke="#fff" stroke-width="1.5"/>
<path d="M696.3 825.0L700.1 820.9" stroke="#fff" stroke-width="1.2"/>
<path d="M697.2 830.1L703.5 824.4" stroke="#fff" stroke-width="1.5"/>
<path d="M702.2 831.5L706.6 828.2" stroke="#fff" stroke-width="1.2"/>
<path d="M702.2 836.7L709.4 832.2" stroke="#fff" stroke-width="1.5"/>
<path d="M706.9 839.0L711.8 836.5" stroke="#fff" stroke-width="1.2"/>
<path d="M705.9 844.1L713.8 840.9" stroke="#fff" stroke-width="1.5"/>
<path d="M710.2 847.1L715.5 845.5" stroke="#fff" stroke-width="1.2"/>
<path d="M708.4 852.0L716.7 850.3" stroke="#fff" stroke-width="1.5"/>
<path d="M712.0 855.7L717.5 855.1" stroke="#fff" stroke-width="1.2"/>
<path d="M709.4 860.2L717.9 859.9" stroke="#fff" stroke-width="1.5"/>
<path d="M712.3 864.5L717.8 864.8" stroke="#fff" stroke-width="1.2"/>
<path d="M708.9 868.5L717.4 869.7" stroke="#fff" stroke-width="1.5"/>
<path d="M711.1 873.3L716.5 874.5" stroke="#fff" stroke-width="1.2"/>
<path d="M707.1 876.6L715.2 879.2" stroke="#fff" stroke-width="1.5"/>
<path d="M708.4 881.6L713.4 883.8" stroke="#fff" stroke-width="1.2"/>
<path d="M703.8 884.2L711.3 888.2" stroke="#fff" stroke-width="1.5"/>
<path d="M704.3 889.4L708.9 892.4" stroke="#fff" stroke-width="1.2"/>
<path d="M699.3 891.1L706.0 896.4" stroke="#fff" stroke-width="1.5"/>
<path d="M698.8 896.3L702.9 900.1" stroke="#fff" stroke-width="1.2"/>
<path d="M693.7 897.2L699.4 903.5" stroke="#fff" stroke-width="1.5"/>
<path d="M692.3 902.2L695.6 906.6" stroke="#fff" stroke-width="1.2"/>
<path d="M687.1 902.2L691.6 909.4" stroke="#fff" stroke-width="1.5"/>
<path d="M684.8 906.9L687.3 911.8" stroke="#fff" stroke-width="1.2"/>
<path d="M679.7 905.9L682.9 913.8" stroke="#fff" stroke-width="1.5"/>
<path d="M676.7 910.2L678.3 915.5" stroke="#fff" stroke-width="1.2"/>
<path d="M671.8 908.4L673.5 916.7" stroke="#fff" stroke-width="1.5"/>
<path d="M668.1 912.0L668.7 917.5" stroke="#fff" stroke-width="1.2"/>
<path d="M663.6 909.4L663.9 917.9" stroke="#fff" stroke-width="1.5"/>
<path d="M659.3 912.3L659.0 917.8" stroke="#fff" stroke-width="1.2"/>
<path d="M655.3 908.9L654.1 917.4" stroke="#fff" stroke-width="1.5"/>
<path d="M650.5 911.1L649.3 916.5" stroke="#fff" stroke-width="1.2"/>
<path d="M647.2 907.1L644.6 915.2" stroke="#fff" stroke-width="1.5"/>
<path d="M642.2 908.4L640.0 913.4" stroke="#fff" stroke-width="1.2"/>
<path d="M639.6 903.8L635.6 911.3" stroke="#fff" stroke-width="1.5"/>
<path d="M634.4 904.3L631.4 908.9" stroke="#fff" stroke-width="1.2"/>
<path d="M632.7 899.3L627.4 906.0" stroke="#fff" stroke-width="1.5"/>
<path d="M627.5 898.8L623.7 902.9" stroke="#fff" stroke-width="1.2"/>
<path d="M626.6 893.7L620.3 899.4" stroke="#fff" stroke-width="1.5"/>
<path d="M621.6 892.3L617.2 895.6" stroke="#fff" stroke-width="1.2"/>
<path d="M621.6 887.1L614.4 891.6" stroke="#fff" stroke-width="1.5"/>
<path d="M616.9 884.8L612.0 887.3" stroke="#fff" stroke-width="1.2"/>
<path d="M617.9 879.7L610.0 882.9" stroke="#fff" stroke-width="1.5"/>
<path d="M613.6 876.7L608.3 878.3" stroke="#fff" stroke-width="1.2"/>
<path d="M615.4 871.8L607.1 873.5" stroke="#fff" stroke-width="1.5"/>
<path d="M611.8 868.1L606.3 868.7" stroke="#fff" stroke-width="1.2"/>
<path d="M614.4 863.6L605.9 863.9" stroke="#fff" stroke-width="1.5"/>
<path d="M611.5 859.3L606.0 859.0" stroke="#fff" stroke-width="1.2"/>
<path d="M614.9 855.3L606.4 854.1" stroke="#fff" stroke-width="1.5"/>
<path d="M612.7 850.5L607.3 849.3" stroke="#fff" stroke-width="1.2"/>
<path d="M616.7 847.2L608.6 844.6" stroke="#fff" stroke-width="1.5"/>
<path d="M615.4 842.2L610.4 840.0" stroke="#fff" stroke-width="1.2"/>
<path d="M620.0 839.6L612.5 835.6" stroke="#fff" stroke-width="1.5"/>
<path d="M619.5 834.4L614.9 831.4" stroke="#fff" stroke-width="1.2"/>
<path d="M624.5 832.7L617.8 827.4" stroke="#fff" stroke-width="1.5"/>
<path d="M625.0 827.5L620.9 823.7" stroke="#fff" stroke-width="1.2"/>
<path d="M630.1 826.6L624.4 820.3" stroke="#fff" stroke-width="1.5"/>
<path d="M631.5 821.6L628.2 817.2" stroke="#fff" stroke-width="1.2"/>
<path d="M636.7 821.6L632.2 814.4" stroke="#fff" stroke-width="1.5"/>
<path d="M639.0 816.9L636.5 812.0" stroke="#fff" stroke-width="1.2"/>
<path d="M644.1 817.9L640.9 810.0" stroke="#fff" stroke-width="1.5"/>
<path d="M647.1 813.6L645.5 808.3" stroke="#fff" stroke-width="1.2"/>
<path d="M652.0 815.4L650.3 807.1" stroke="#fff" stroke-width="1.5"/>
<path d="M655.7 811.8L655.1 806.3" stroke="#fff" stroke-width="1.2"/>
<text x="660.5" y="821.4" font-size="10.5" transform="rotate(-2.0 660.5 821.4)" dy="3.6">30</text>
<text x="680.9" y="826.1" font-size="10.5" transform="rotate(28.0 680.9 826.1)" dy="3.6">33</text>
<text x="696.2" y="840.4" font-size="10.5" transform="rotate(58.0 696.2 840.4)" dy="3.6">0</text>
<text x="702.4" y="860.5" font-size="10.5" transform="rotate(88.0 702.4 860.5)" dy="3.6">3</text>
<text x="697.7" y="880.9" font-size="10.5" transform="rotate(118.0 697.7 880.9)" dy="3.6">6</text>
<text x="683.4" y="896.2" font-size="10.5" transform="rotate(148.0 683.4 896.2)" dy="3.6">9</text>
<text x="663.3" y="902.4" font-size="10.5" transform="rotate(178.0 663.3 902.4)" dy="3.6">12</text>
<text x="642.9" y="897.7" font-size="10.5" transform="rotate(208.0 642.9 897.7)" dy="3.6">15</text>
<text x="627.6" y="883.4" font-size="10.5" transform="rotate(238.0 627.6 883.4)" dy="3.6">18</text>
<text x="621.4" y="863.3" font-size="10.5" transform="rotate(268.0 621.4 863.3)" dy="3.6">21</text>
<text x="626.1" y="842.9" font-size="10.5" transform="rotate(298.0 626.1 842.9)" dy="3.6">24</text>
<text x="640.4" y="827.6" font-size="10.5" transform="rotate(328.0 640.4 827.6)" dy="3.6">27</text>
<g transform="translate(661.9 862.9)"><path d="M0 -36 C-2.5 -36 -4 -31 -4 -26 L-5 -16 L-30 3 L-29 7 L-5 -1 L-5 15 L-15 26 L-14.5 30 L-2 25.5 L0 25.5 L2 25.5 L14.5 30 L15 26 L5 15 L5 -1 L29 7 L30 3 L5 -16 L4 -26 C4 -31 2.5 -36 0 -36Z" fill="none" stroke="#f2f2f2" stroke-width="1" stroke-linejoin="round"/><path d="M0 25.5V30M-2 30H2" stroke="#f2f2f2" stroke-width="1"/></g>
<circle cx="811.1" cy="861.9" r="68" fill="#2a2a2b"/><circle cx="811.1" cy="861.9" r="68" fill="none" stroke="#1c1c1d" stroke-width="1.5"/><circle cx="811.1" cy="861.9" r="63" fill="none" stroke="#3d3d3e" stroke-width="5"/><circle cx="811.1" cy="861.9" r="59" fill="none" stroke="#2f2f30" stroke-width="3"/><circle cx="811.1" cy="861.9" r="57" fill="#1b1a1f"/>
<path d="M811.1 814.9L811.1 806.4" stroke="#fff" stroke-width="2.0"/>
<path d="M819.9 812.2L820.7 807.7" stroke="#fff" stroke-width="1.1"/>
<path d="M827.7 816.3L830.1 809.7" stroke="#fff" stroke-width="1.4"/>
<path d="M836.4 818.2L838.6 814.3" stroke="#fff" stroke-width="1.1"/>
<path d="M841.3 825.9L846.8 819.4" stroke="#fff" stroke-width="2.0"/>
<path d="M849.8 829.4L853.2 826.5" stroke="#fff" stroke-width="1.1"/>
<path d="M853.1 837.6L859.2 834.1" stroke="#fff" stroke-width="1.4"/>
<path d="M858.6 844.6L862.8 843.1" stroke="#fff" stroke-width="1.1"/>
<path d="M857.4 853.7L865.8 852.3" stroke="#fff" stroke-width="2.0"/>
<path d="M861.6 861.9L866.1 861.9" stroke="#fff" stroke-width="1.1"/>
<path d="M858.9 870.3L865.8 871.5" stroke="#fff" stroke-width="1.4"/>
<path d="M858.6 879.2L862.8 880.7" stroke="#fff" stroke-width="1.1"/>
<path d="M851.8 885.4L859.2 889.6" stroke="#fff" stroke-width="2.0"/>
<path d="M849.8 894.4L853.2 897.3" stroke="#fff" stroke-width="1.1"/>
<path d="M842.3 899.1L846.8 904.4" stroke="#fff" stroke-width="1.4"/>
<path d="M836.4 905.6L838.6 909.5" stroke="#fff" stroke-width="1.1"/>
<path d="M827.2 906.1L830.1 914.1" stroke="#fff" stroke-width="2.0"/>
<path d="M819.9 911.6L820.7 916.1" stroke="#fff" stroke-width="1.1"/>
<path d="M811.1 910.4L811.1 917.4" stroke="#fff" stroke-width="1.4"/>
<path d="M802.3 911.6L801.5 916.1" stroke="#fff" stroke-width="1.1"/>
<path d="M795.0 906.1L792.1 914.1" stroke="#fff" stroke-width="2.0"/>
<path d="M785.9 905.6L783.6 909.5" stroke="#fff" stroke-width="1.1"/>
<path d="M779.9 899.1L775.4 904.4" stroke="#fff" stroke-width="1.4"/>
<path d="M772.4 894.4L769.0 897.3" stroke="#fff" stroke-width="1.1"/>
<path d="M770.4 885.4L763.0 889.6" stroke="#fff" stroke-width="2.0"/>
<path d="M763.6 879.2L759.4 880.7" stroke="#fff" stroke-width="1.1"/>
<path d="M763.3 870.3L756.4 871.5" stroke="#fff" stroke-width="1.4"/>
<path d="M760.6 861.9L756.1 861.9" stroke="#fff" stroke-width="1.1"/>
<path d="M764.8 853.7L756.4 852.3" stroke="#fff" stroke-width="2.0"/>
<path d="M763.6 844.6L759.4 843.1" stroke="#fff" stroke-width="1.1"/>
<path d="M769.1 837.6L763.0 834.1" stroke="#fff" stroke-width="1.4"/>
<path d="M772.4 829.4L769.0 826.5" stroke="#fff" stroke-width="1.1"/>
<path d="M780.9 825.9L775.4 819.4" stroke="#fff" stroke-width="2.0"/>
<text x="811.1" y="821.9" font-size="7.6" dy="2.7" font-weight="normal" fill="#ececec" stroke="#ececec" stroke-width=".3">0</text>
<text x="836.5" y="831.6" font-size="7.6" dy="2.7" font-weight="normal" fill="#ececec" stroke="#ececec" stroke-width=".3">20</text>
<text x="850.0" y="855.0" font-size="7.6" dy="2.7" font-weight="normal" fill="#ececec" stroke="#ececec" stroke-width=".3">40</text>
<text x="845.3" y="881.6" font-size="7.6" dy="2.7" font-weight="normal" fill="#ececec" stroke="#ececec" stroke-width=".3">60</text>
<text x="824.6" y="899.0" font-size="7.6" dy="2.7" font-weight="normal" fill="#ececec" stroke="#ececec" stroke-width=".3">80</text>
<text x="797.6" y="899.0" font-size="7.6" dy="2.7" font-weight="normal" fill="#ececec" stroke="#ececec" stroke-width=".3">100</text>
<text x="776.9" y="881.6" font-size="7.6" dy="2.7" font-weight="normal" fill="#ececec" stroke="#ececec" stroke-width=".3">120</text>
<text x="772.2" y="855.0" font-size="7.6" dy="2.7" font-weight="normal" fill="#ececec" stroke="#ececec" stroke-width=".3">140</text>
<text x="785.7" y="831.6" font-size="7.6" dy="2.7" font-weight="normal" fill="#ececec" stroke="#ececec" stroke-width=".3">160</text>
<text x="810.6" y="849.4" font-size="4.8" font-weight="normal" fill="#e8e8e8">AIR SPEED</text>
<text x="814.6" y="877.4" font-size="4" font-weight="normal" fill="#bdbdbd">KNOTS</text>
<path d="M807.3 865.6L810.4 867.1L788.2 908.6L787.5 908.2Z" fill="#fff"/>
<circle cx="811.1" cy="861.9" r="1.6" fill="#2a2a2e"/>
<circle cx="960.3" cy="861.9" r="68" fill="#2a2a2b"/><circle cx="960.3" cy="861.9" r="68" fill="none" stroke="#1c1c1d" stroke-width="1.5"/><circle cx="960.3" cy="861.9" r="63" fill="none" stroke="#3d3d3e" stroke-width="5"/><circle cx="960.3" cy="861.9" r="59" fill="none" stroke="#2f2f30" stroke-width="3"/><circle cx="960.3" cy="861.9" r="57" fill="#1b1a1f"/>
<clipPath id="c3"><circle cx="960.3" cy="861.9" r="56"/></clipPath><clipPath id="c3i"><circle cx="960.3" cy="861.9" r="46"/></clipPath>
<g clip-path="url(#c3)"><g transform="rotate(-2 960.3 861.9)"><rect x="895.3" y="795.9" width="130" height="66" fill="#629fdf"/><rect x="895.3" y="861.9" width="130" height="66" fill="#5f3a10"/><path d="M895.3 861.9h130" stroke="#f4f4f4" stroke-width="1.2"/></g></g>
<g clip-path="url(#c3i)"><rect x="910.3" y="810.9" width="100" height="50" fill="#6aa8e6"/><rect x="910.3" y="860.9" width="100" height="52" fill="#6e4514"/><circle cx="960.3" cy="861.9" r="46" fill="none" stroke="#000" stroke-opacity=".18" stroke-width="1.5"/></g>
<path d="M918.4 839.6L910.4 835.4" stroke="#f4f8ff" stroke-width="1.8"/>
<path d="M935.1 821.6L930.4 814.0" stroke="#f4f8ff" stroke-width="1.8"/>
<path d="M942.5 817.9L940.3 812.3" stroke="#f4f8ff" stroke-width="1.2"/>
<path d="M950.4 815.4L949.2 809.6" stroke="#f4f8ff" stroke-width="1.2"/>
<path d="M966.9 814.9L967.7 808.9" stroke="#f4f8ff" stroke-width="1.2"/>
<path d="M975.0 816.7L976.8 811.0" stroke="#f4f8ff" stroke-width="1.2"/>
<path d="M982.6 820.0L986.8 812.0" stroke="#f4f8ff" stroke-width="1.8"/>
<path d="M1000.6 836.7L1008.2 832.0" stroke="#f4f8ff" stroke-width="1.8"/>
<circle cx="922.3" cy="826.4" r="1.4" fill="#f4f8ff"/>
<circle cx="995.8" cy="823.9" r="1.4" fill="#f4f8ff"/>
<path d="M956.0 805.9l2.2 0 l0.8 10 l-2 0zM961.5 805.9l2.2 0 l-1 10 l-2 0z" fill="#e8731c"/>
<path d="M956.3 825.9h8.0" stroke="#f2f2f2" stroke-width="1.0"/>
<path d="M957.3 835.4h6.0" stroke="#f2f2f2" stroke-width="1.0"/>
<path d="M953.3 841.4h14.0" stroke="#f2f2f2" stroke-width="1.4"/>
<path d="M953.3 852.4h14.0" stroke="#f2f2f2" stroke-width="1.4"/>
<path d="M957.8 857.9h5.0" stroke="#f2f2f2" stroke-width="1.0"/>
<path d="M957.8 866.4h5.0" stroke="#f2f2f2" stroke-width="1.0"/>
<path d="M953.3 875.4h14.0" stroke="#f2f2f2" stroke-width="1.4"/>
<path d="M954.3 886.9h12.0" stroke="#f2f2f2" stroke-width="1.2"/>
<path d="M957.8 891.9h5.0" stroke="#f2f2f2" stroke-width="1.0"/>
<path d="M957.8 901.9h5.0" stroke="#f2f2f2" stroke-width="1.0"/>
<path d="M955.3 906.4h10.0" stroke="#f2f2f2" stroke-width="1.2"/>
<text x="948.8" y="830.9" font-size="10" font-weight="normal" fill="#f0f4fa" dy="3.4">3</text><text x="971.8" y="830.9" font-size="10" font-weight="normal" fill="#f0f4fa" dy="3.4">0</text><path d="M955.3 830.9h10" stroke="#f2f2f2" stroke-width="1.2"/>
<text x="948.8" y="897.9" font-size="10" font-weight="normal" fill="#f0f4fa" dy="3.4">3</text><text x="971.8" y="897.9" font-size="10" font-weight="normal" fill="#f0f4fa" dy="3.4">0</text><path d="M955.3 897.9h10" stroke="#f2f2f2" stroke-width="1.2"/>
<text x="960.3" y="848.9" font-size="5.2" font-weight="normal" fill="#eef3fa">CLI&#8211;MB</text>
<text x="960.3" y="883.4" font-size="5.2" font-weight="normal" fill="#f2ece2">DI&#8211;VE</text>
<path d="M925.3 861.4h28.5 c0.5 4 2 6 6.5 6 c4.5 0 6 -2 6.5 -6 h28.5" fill="none" stroke="#c9772d" stroke-width="2.2"/>
<circle cx="960.3" cy="861.4" r="1.3" fill="#9a8a7a"/>
<circle cx="1109.5" cy="861.9" r="68" fill="#2a2a2b"/><circle cx="1109.5" cy="861.9" r="68" fill="none" stroke="#1c1c1d" stroke-width="1.5"/><circle cx="1109.5" cy="861.9" r="63" fill="none" stroke="#3d3d3e" stroke-width="5"/><circle cx="1109.5" cy="861.9" r="59" fill="none" stroke="#2f2f30" stroke-width="3"/><circle cx="1109.5" cy="861.9" r="57" fill="#1b1a1f"/>
<circle cx="1109.5" cy="861.9" r="31" fill="#222126"/><path d="M1095.5 845.9 l14 10 l-8 18 l-14 -12z" fill="#2b2a30"/>
<path d="M1109.5 815.9L1109.5 805.9" stroke="#eee" stroke-width="1.8"/>
<path d="M1115.9 811.3L1116.5 806.3" stroke="#ddd" stroke-width="1.1"/>
<path d="M1122.2 812.5L1123.4 807.7" stroke="#ddd" stroke-width="1.1"/>
<path d="M1128.3 814.5L1130.1 809.8" stroke="#ddd" stroke-width="1.1"/>
<path d="M1134.1 817.2L1136.5 812.8" stroke="#ddd" stroke-width="1.1"/>
<path d="M1136.5 824.7L1142.4 816.6" stroke="#eee" stroke-width="1.8"/>
<path d="M1144.4 824.7L1147.8 821.1" stroke="#ddd" stroke-width="1.1"/>
<path d="M1148.8 829.4L1152.6 826.2" stroke="#ddd" stroke-width="1.1"/>
<path d="M1152.6 834.6L1156.8 831.9" stroke="#ddd" stroke-width="1.1"/>
<path d="M1155.6 840.2L1160.2 838.1" stroke="#ddd" stroke-width="1.1"/>
<path d="M1153.2 847.7L1162.8 844.6" stroke="#eee" stroke-width="1.8"/>
<path d="M1159.6 852.3L1164.5 851.4" stroke="#ddd" stroke-width="1.1"/>
<path d="M1160.4 858.7L1165.4 858.4" stroke="#ddd" stroke-width="1.1"/>
<path d="M1160.4 865.1L1165.4 865.4" stroke="#ddd" stroke-width="1.1"/>
<path d="M1159.6 871.5L1164.5 872.4" stroke="#ddd" stroke-width="1.1"/>
<path d="M1153.2 876.1L1162.8 879.2" stroke="#eee" stroke-width="1.8"/>
<path d="M1155.6 883.6L1160.2 885.7" stroke="#ddd" stroke-width="1.1"/>
<path d="M1152.6 889.2L1156.8 891.9" stroke="#ddd" stroke-width="1.1"/>
<path d="M1148.8 894.4L1152.6 897.6" stroke="#ddd" stroke-width="1.1"/>
<path d="M1144.4 899.1L1147.8 902.7" stroke="#ddd" stroke-width="1.1"/>
<path d="M1136.5 899.1L1142.4 907.2" stroke="#eee" stroke-width="1.8"/>
<path d="M1134.1 906.6L1136.5 911.0" stroke="#ddd" stroke-width="1.1"/>
<path d="M1128.3 909.3L1130.1 914.0" stroke="#ddd" stroke-width="1.1"/>
<path d="M1122.2 911.3L1123.4 916.1" stroke="#ddd" stroke-width="1.1"/>
<path d="M1115.9 912.5L1116.5 917.5" stroke="#ddd" stroke-width="1.1"/>
<path d="M1109.5 907.9L1109.5 917.9" stroke="#eee" stroke-width="1.8"/>
<path d="M1103.1 912.5L1102.5 917.5" stroke="#ddd" stroke-width="1.1"/>
<path d="M1096.8 911.3L1095.6 916.1" stroke="#ddd" stroke-width="1.1"/>
<path d="M1090.7 909.3L1088.9 914.0" stroke="#ddd" stroke-width="1.1"/>
<path d="M1084.9 906.6L1082.5 911.0" stroke="#ddd" stroke-width="1.1"/>
<path d="M1082.5 899.1L1076.6 907.2" stroke="#eee" stroke-width="1.8"/>
<path d="M1074.6 899.1L1071.2 902.7" stroke="#ddd" stroke-width="1.1"/>
<path d="M1070.2 894.4L1066.4 897.6" stroke="#ddd" stroke-width="1.1"/>
<path d="M1066.4 889.2L1062.2 891.9" stroke="#ddd" stroke-width="1.1"/>
<path d="M1063.4 883.6L1058.8 885.7" stroke="#ddd" stroke-width="1.1"/>
<path d="M1065.8 876.1L1056.2 879.2" stroke="#eee" stroke-width="1.8"/>
<path d="M1059.4 871.5L1054.5 872.4" stroke="#ddd" stroke-width="1.1"/>
<path d="M1058.6 865.1L1053.6 865.4" stroke="#ddd" stroke-width="1.1"/>
<path d="M1058.6 858.7L1053.6 858.4" stroke="#ddd" stroke-width="1.1"/>
<path d="M1059.4 852.3L1054.5 851.4" stroke="#ddd" stroke-width="1.1"/>
<path d="M1065.8 847.7L1056.2 844.6" stroke="#eee" stroke-width="1.8"/>
<path d="M1063.4 840.2L1058.8 838.1" stroke="#ddd" stroke-width="1.1"/>
<path d="M1066.4 834.6L1062.2 831.9" stroke="#ddd" stroke-width="1.1"/>
<path d="M1070.2 829.4L1066.4 826.2" stroke="#ddd" stroke-width="1.1"/>
<path d="M1074.6 824.7L1071.2 821.1" stroke="#ddd" stroke-width="1.1"/>
<path d="M1082.5 824.7L1076.6 816.6" stroke="#eee" stroke-width="1.8"/>
<path d="M1084.9 817.2L1082.5 812.8" stroke="#ddd" stroke-width="1.1"/>
<path d="M1090.7 814.5L1088.9 809.8" stroke="#ddd" stroke-width="1.1"/>
<path d="M1096.8 812.5L1095.6 807.7" stroke="#ddd" stroke-width="1.1"/>
<path d="M1103.1 811.3L1102.5 806.3" stroke="#ddd" stroke-width="1.1"/>
<text x="1109.5" y="821.4" font-size="11" dy="3.9" fill="#f4f4f4">0</text>
<text x="1133.3" y="829.1" font-size="11" dy="3.9" fill="#f4f4f4">1</text>
<text x="1148.0" y="849.4" font-size="11" dy="3.9" fill="#f4f4f4">2</text>
<text x="1148.0" y="874.4" font-size="11" dy="3.9" fill="#f4f4f4">3</text>
<text x="1133.3" y="894.7" font-size="11" dy="3.9" fill="#f4f4f4">4</text>
<text x="1109.5" y="902.4" font-size="11" dy="3.9" fill="#f4f4f4">5</text>
<text x="1085.7" y="894.7" font-size="11" dy="3.9" fill="#f4f4f4">6</text>
<text x="1071.0" y="874.4" font-size="11" dy="3.9" fill="#f4f4f4">7</text>
<text x="1071.0" y="849.4" font-size="11" dy="3.9" fill="#f4f4f4">8</text>
<text x="1085.7" y="829.1" font-size="11" dy="3.9" fill="#f4f4f4">9</text>
<text x="1125.0" y="854.4" font-size="9" font-style="italic" fill="#f0f0f0">ALT</text>
<text x="1101.5" y="819.4" font-size="3.6" font-weight="normal" fill="#ccc">100</text><text x="1119.5" y="819.4" font-size="3.6" font-weight="normal" fill="#ccc">FEET</text>
<g stroke="#bbb" stroke-width=".7"><path d="M1142.5 856.9h12M1142.5 863.4h12M1151.5 860.1h9M1155.5 865.9h8"/></g>
<text x="1146.5" y="860.9" font-size="3.6" font-weight="normal" fill="#bbb">29.9</text><text x="1146.5" y="867.4" font-size="3.6" font-weight="normal" fill="#bbb">30.0</text>
<path d="M1108.7 858.7 L1111.4 859.2 L1115.0 838.5 L1114.4 837.9 L1119.9 807.9 L1119.2 807.8 L1113.6 837.7 L1112.8 838.1Z" fill="#f4f4f4"/>
<path d="M1119.2 811.3l-2.5 -3 h5z" fill="none" stroke="#ddd" stroke-width=".7"/>
<path d="M1114.6 861.2 L1111.3 866.7 L1128.0 877.8 L1135.9 878.2 L1132.3 870.5Z" fill="#fdfdfd"/>
<path d="M1113.6 863.5 L1110.9 866.1 L1139.6 896.7 L1145.1 899.8 L1142.4 894.1Z" fill="#fdfdfd"/>
<circle cx="1258.2" cy="861.9" r="68" fill="#2a2a2b"/><circle cx="1258.2" cy="861.9" r="68" fill="none" stroke="#1c1c1d" stroke-width="1.5"/><circle cx="1258.2" cy="861.9" r="63" fill="none" stroke="#3d3d3e" stroke-width="5"/><circle cx="1258.2" cy="861.9" r="59" fill="none" stroke="#2f2f30" stroke-width="3"/><circle cx="1258.2" cy="861.9" r="57" fill="#1b1a1f"/>
<path d="M1213.2 861.9L1202.7 861.9" stroke="#f0f0f0" stroke-width="1.8"/>
<path d="M1208.8 854.4L1203.3 853.6" stroke="#e4e4e4" stroke-width="1.2"/>
<path d="M1208.8 869.4L1203.3 870.2" stroke="#e4e4e4" stroke-width="1.2"/>
<path d="M1210.5 847.0L1205.2 845.4" stroke="#e4e4e4" stroke-width="1.2"/>
<path d="M1210.5 876.8L1205.2 878.4" stroke="#e4e4e4" stroke-width="1.2"/>
<path d="M1213.2 840.0L1208.3 837.6" stroke="#e4e4e4" stroke-width="1.2"/>
<path d="M1213.2 883.8L1208.3 886.2" stroke="#e4e4e4" stroke-width="1.2"/>
<path d="M1217.0 833.5L1212.5 830.4" stroke="#e4e4e4" stroke-width="1.2"/>
<path d="M1217.0 890.3L1212.5 893.4" stroke="#e4e4e4" stroke-width="1.2"/>
<path d="M1225.4 831.1L1217.8 823.9" stroke="#f0f0f0" stroke-width="1.8"/>
<path d="M1225.4 892.7L1217.8 899.9" stroke="#f0f0f0" stroke-width="1.8"/>
<path d="M1227.3 822.6L1224.0 818.2" stroke="#e4e4e4" stroke-width="1.2"/>
<path d="M1227.3 901.2L1224.0 905.6" stroke="#e4e4e4" stroke-width="1.2"/>
<path d="M1233.6 818.4L1230.9 813.6" stroke="#e4e4e4" stroke-width="1.2"/>
<path d="M1233.6 905.4L1230.9 910.2" stroke="#e4e4e4" stroke-width="1.2"/>
<path d="M1240.4 815.2L1238.5 810.0" stroke="#e4e4e4" stroke-width="1.2"/>
<path d="M1240.4 908.6L1238.5 913.8" stroke="#e4e4e4" stroke-width="1.2"/>
<path d="M1247.7 813.0L1246.5 807.6" stroke="#e4e4e4" stroke-width="1.2"/>
<path d="M1247.7 910.8L1246.5 916.2" stroke="#e4e4e4" stroke-width="1.2"/>
<path d="M1255.5 817.0L1254.8 806.5" stroke="#f0f0f0" stroke-width="1.8"/>
<path d="M1255.5 906.8L1254.8 917.3" stroke="#f0f0f0" stroke-width="1.8"/>
<path d="M1286.9 827.2L1293.6 819.1" stroke="#f0f0f0" stroke-width="1.6"/>
<path d="M1302.7 855.2L1313.1 853.7" stroke="#f0f0f0" stroke-width="1.6"/>
<path d="M1286.9 896.6L1293.6 904.7" stroke="#f0f0f0" stroke-width="1.6"/>
<path d="M1302.7 868.6L1313.1 870.1" stroke="#f0f0f0" stroke-width="1.6"/>
<text x="1219.2" y="861.9" font-size="10" dy="3.5" fill="#f4f4f4">0</text>
<text x="1230.3" y="836.8" font-size="10" dy="3.5" fill="#f4f4f4">5</text>
<text x="1230.3" y="887.0" font-size="10" dy="3.5" fill="#f4f4f4">5</text>
<text x="1255.9" y="824.0" font-size="10" dy="3.5" fill="#f4f4f4">10</text>
<text x="1255.9" y="899.8" font-size="10" dy="3.5" fill="#f4f4f4">10</text>
<text x="1279.4" y="832.8" font-size="10" dy="3.5" fill="#f4f4f4">15</text>
<text x="1279.4" y="891.0" font-size="10" dy="3.5" fill="#f4f4f4">15</text>
<text x="1294.2" y="861.9" font-size="10" dy="3.5" fill="#f4f4f4">20</text>
<text x="1273.7" y="846.9" font-size="5.9" font-weight="normal" fill="#e6e6e6">VERTICAL</text>
<text x="1268.7" y="854.9" font-size="5.9" font-weight="normal" fill="#e6e6e6">SPEED</text>
<text x="1271.7" y="874.4" font-size="5.9" font-weight="normal" fill="#e6e6e6">100 FEET</text>
<text x="1278.2" y="882.4" font-size="5.9" font-weight="normal" fill="#e6e6e6">PER MINUTE</text>
<text x="1231.2" y="852.4" font-size="4.6" font-weight="normal" fill="#ddd">UP</text><text x="1231.2" y="875.4" font-size="4.6" font-weight="normal" fill="#ddd">DN</text>
<path d="M1253.8 862.4 L1254.6 858.4 L1232.9 854.7 L1209.1 851.4 L1208.9 852.4 L1232.3 857.9Z" fill="#fdfdfd"/>
</svg><!--G1-->
<div id="pbhead">Playback Control Bar</div>
<div class="tbox" style="left:8px;width:69px">+00:00:08</div>
<div id="track"></div>
<div class="abs" style="left:1823px;top:986px;width:10px;height:24px;background:#0a6fd8;border-radius:1px"></div>
<div class="tbox" style="left:1842px;width:69px">-00:00:00</div>
<svg class="abs" style="left:1870px;top:956px" width="40" height="16" viewBox="0 0 40 16"><circle cx="12.5" cy="7" r="3.6" fill="#3f9a4a" stroke="#1e5a28" stroke-width=".8"/><circle cx="11.5" cy="6" r="1.3" fill="#bfe8c4"/><path d="M10 10l-2.5 3.5" stroke="#333" stroke-width="1.3"/><path d="M26.5 4l7 7M33.5 4l-7 7" stroke="#444" stroke-width="1.7"/></svg>
<div class="abs" style="left:333px;top:1017px;width:31px;height:29px;background:#c5def6;border:1px solid #84b9ea"></div>
<div class="abs" style="left:372px;top:1017px;width:246px;height:29px;background:#c5def6;border:1px solid #84b9ea"></div>
<svg class="abs" style="left:0;top:1012px" width="720" height="40" viewBox="0 1012 720 40">
<defs><linearGradient id="bl" x1="0" y1="0" x2="0" y2="1"><stop offset="0" stop-color="#9cc0f8"/><stop offset=".5" stop-color="#4a80e8"/><stop offset="1" stop-color="#2a5ad0"/></linearGradient>
<linearGradient id="gr" x1="0" y1="0" x2="0" y2="1"><stop offset="0" stop-color="#a8e09a"/><stop offset=".5" stop-color="#5ab850"/><stop offset="1" stop-color="#3a9a36"/></linearGradient>
<radialGradient id="gl2" cx=".4" cy=".35" r=".7"><stop offset="0" stop-color="#c9d9ee"/><stop offset=".6" stop-color="#6f8fb8"/><stop offset="1" stop-color="#4a668f"/></radialGradient>
<linearGradient id="st" x1="0" y1="0" x2="0" y2="1"><stop offset="0" stop-color="#ffd36a"/><stop offset="1" stop-color="#f29a1c"/></linearGradient></defs>
<g fill="url(#bl)" stroke="#2f5fd0" stroke-width=".7">
<path d="M18 1026h2.5v11.5h-2.5zM27 1026v11.5l-6.5-5.750z"/>
<path d="M53 1026v11.5l-6.5-5.750zM59.5 1026v11.5l-6.5-5.750z"/>
<path d="M125 1026v11.5l6.5-5.750zM131.5 1026v11.5l6.5-5.750z"/>
<path d="M157.5 1026v11.5l6.5-5.750zM164 1026h2.5v11.5h-2.5z"/>
<path d="M197 1026h2v11.5h-2zM200.5 1026h1.5v11.5h-1.5zM203 1026v11.5l5.5-5.750z"/>
</g>
<path d="M81 1025v13.5l11-6.750z" fill="url(#gr)" stroke="#3c9a3a" stroke-width=".7"/>
<g fill="#111"><path d="M104.5 1029.5h7.4l-3.7 4.3z"/><path d="M259.8 1029.5h7.4l-3.7 4.3z"/><path d="M406.8 1029.7h7.4l-3.7 4.3z"/><path d="M483.8 1029.7h7.4l-3.7 4.3z"/><path d="M560.8 1029.7h7.4l-3.7 4.3z"/><path d="M606.3 1029.7h7.4l-3.7 4.3z"/><path d="M654.7 1029.7h7.4l-3.7 4.3z"/></g>
<g stroke="#222" stroke-width="1.2"><path d="M180.5 1019v26M219.5 1019v26M366.5 1019v26M620.5 1019v26M668.5 1019v26"/></g>
<g stroke="#84b9ea" stroke-width="1"><path d="M402.5 1018v28M417.5 1018v28M449.5 1018v28M479.5 1018v28M495.5 1018v28M525.5 1018v28M556.5 1018v28M571.5 1018v28M602.5 1018v28"/></g>
<!-- pilot helmet -->
<path d="M231 1029c0-6 4-9.5 9-9.5c5 0 8.5 3 9 8l.5 5c2 3 3 6 3 9l-3 1-2-4-3 2.5c-3 1-7 .5-9-1.5l-1-4c-2-1.5-3.5-4-3.5-6.5z" fill="#6b6b68"/>
<path d="M233 1026c2-4 6-5.5 10-4.5c3 1 5 3 5.5 6l-6 3c-3 0-7-1-9.5-4.5z" fill="#3a3c40"/><path d="M236 1021.5c3-2 7-2 10 0l-2 2.5h-6z" fill="#9a9a96"/>
<path d="M243 1031l5 2 2 8-3 1-3-4z" fill="#2c2c2c"/><circle cx="238" cy="1036" r="3.5" fill="#8a8a86"/>
<!-- jet -->
<path d="M297 1018.5l-8 7-6 2-7 1 3 2.5 4 .5-5 5 3 0 3-1.5 0 4 3 5 2-1.5 0-6 5-6 4-3 2-5z" fill="#6d7f84" stroke="#4f5f64" stroke-width=".5"/>
<!-- globe -->
<circle cx="316.5" cy="1032" r="11" fill="url(#gl2)" stroke="#5a6f90" stroke-width=".7"/><path d="M310 1026l4-1 3 2 4-1 2 3-2 3 1 3-3 3-2-3-3-1-1-3-3-2zM306 1032l2 1 1 3-2 1z" fill="#e6edf6" opacity=".85"/>
<!-- binoculars -->
<g transform="rotate(-25 349 1032)"><rect x="339" y="1027" width="21" height="10" rx="3" fill="#1f4fa8"/><rect x="352" y="1026" width="8" height="12" rx="2.5" fill="#16243e"/><rect x="337" y="1028" width="6" height="8" rx="2" fill="#101824"/><ellipse cx="338.5" cy="1032" rx="1.6" ry="2.6" fill="#e8a33a"/><rect x="343" y="1028.2" width="8" height="2.2" fill="#6a9ae8" opacity=".8"/></g>
<!-- plane on stand -->
<path d="M377 1023.8 L383 1022.2 L395 1021.2 L398.5 1017.6 L400.3 1017.6 L399.6 1021.4 L400.2 1023 L394 1024.4 L388 1025.4 L381 1025.2Z" fill="#b57d52" stroke="#5e3c22" stroke-width=".5"/><path d="M379 1023.6 L395 1021.8" stroke="#ecd9bd" stroke-width=".9"/><path d="M386 1024.2l6 1.6 3-.4-4-1.8z" fill="#6e4a2c"/>
<path d="M388.5 1025v15M383 1043l5.5-3 5.5 3M383 1038.5l11 4M394 1038.5l-11 4" stroke="#111" stroke-width="1.2" fill="none"/>
<!-- cross plane -->
<path d="M424 1021l12 13M437 1020l-12 14" stroke="#5a5a52" stroke-width="1.3"/><path d="M436 1034l9 9" stroke="#444" stroke-width="1.2" stroke-dasharray="2 1.3"/><path d="M427 1031l9-9 1.5 1-8 9.5z" fill="#8a7858"/><ellipse cx="431" cy="1027.5" rx="3.2" ry="1.6" transform="rotate(-45 431 1027.5)" fill="#a08a60"/>
<!-- label plane -->
<rect x="462.5" y="1021" width="15" height="5.5" fill="#111"/><path d="M464.5 1023.8h11" stroke="#fff" stroke-width="1.3" stroke-dasharray="1.8 .9"/><path d="M462.5 1026l-4 9" stroke="#111" stroke-width="1"/>
<path d="M454 1037 L460 1035.4 L471 1034.4 L474.5 1030.8 L476.3 1030.8 L475.6 1034.6 L476.2 1036.2 L470 1037.6 L464 1038.6 L458 1038.4Z" fill="#b57d52" stroke="#5e3c22" stroke-width=".5"/><path d="M456 1036.8 L471 1035" stroke="#ecd9bd" stroke-width=".9"/><path d="M462 1037.4l6 1.6 3-.4-4-1.8z" fill="#6e4a2c"/>
<!-- tank -->
<path d="M500 1032h8l1-4h8l1 3 4 1v3h-22z" fill="#8b6a3c" stroke="#4a3820" stroke-width=".5"/><path d="M503 1024.5l7 5" stroke="#4a3820" stroke-width="1.6"/><rect x="499.5" y="1034.5" width="24" height="5" rx="2.5" fill="#4c4030"/><path d="M501 1037h21" stroke="#9a8458" stroke-width="1.4" stroke-dasharray="2 1"/>
<!-- radar -->
<path d="M534 1027c0-4 3-7 7-7M537 1028c0-2.5 2-4.5 4.5-4.5" stroke="#3fae4a" stroke-width="1.5" fill="none"/>
<ellipse cx="546" cy="1034" rx="7" ry="9" transform="rotate(-40 546 1034)" fill="#b8bcc2" stroke="#7a7e86" stroke-width=".7"/><ellipse cx="547.5" cy="1033" rx="4.8" ry="6.8" transform="rotate(-40 547.5 1033)" fill="#e4e6ea"/><path d="M541 1029l6 5" stroke="#666" stroke-width="1"/><path d="M543 1040l3 3.5h5" stroke="#8a8e96" stroke-width="2" fill="none"/>
<!-- frame -->
<rect x="580.5" y="1023.5" width="16" height="16" fill="none" stroke="#111" stroke-width="1.4" stroke-dasharray="2.2 1.4"/><rect x="580.5" y="1029.5" width="11" height="10" fill="#e4e6ea" stroke="#111" stroke-width="1.5"/><rect x="583" y="1032" width="6" height="5" fill="#a9adb5"/><path d="M590 1027l6-5.5M596 1026v-4.5h-4.5" stroke="#1f4fb8" stroke-width="1.8" fill="none"/>
<!-- star -->
<path d="M640.7 1021.5l3.1 6.6 7.2.8-5.3 4.9 1.5 7.1-6.5-3.6-6.5 3.6 1.5-7.1-5.3-4.9 7.2-.8z" fill="url(#st)" stroke="#e08a10" stroke-width=".8" stroke-linejoin="round"/>
</svg>
<div class="abs" style="left:682px;top:1035px;width:1211px;height:3px;background:#e8e8e8;border:1px solid #d0d0d0"></div>
<div class="abs" style="left:687px;top:1022px;width:1px;height:4px;background:#b5b5b5"></div><div class="abs" style="left:1887px;top:1022px;width:1px;height:4px;background:#b5b5b5"></div>
<svg class="abs" style="left:790px;top:1025px" width="13" height="22" viewBox="0 0 13 22"><path d="M6.5 .5L12 6.5V21H1V6.5Z" fill="#0a6fd8"/></svg>

<div id="status"><div class="abs" style="left:1764px;top:1px;width:1px;height:22px;background:#d7d7d7"></div><div class="abs" style="left:1789px;top:1px;width:1px;height:22px;background:#d7d7d7"></div><div class="abs" style="left:1814px;top:1px;width:1px;height:22px;background:#d7d7d7"></div><div class="abs" style="left:1839px;top:1px;width:1px;height:22px;background:#d7d7d7"></div><div class="abs" style="left:1864px;top:1px;width:1px;height:22px;background:#d7d7d7"></div><div class="abs" style="left:1889px;top:1px;width:1px;height:22px;background:#d7d7d7"></div>
<svg class="abs" style="left:1842px;top:2px" width="78" height="22" viewBox="0 0 78 22"><rect x="3" y="2" width="14" height="14" fill="#3f55a5"/><path d="M13 17v-5.5h2l.3-2.200h-2.3v-1.3c0-.7.3-1 1.100-1h1.200v-2c-.5-.1-1.200-.1-1.800-.1c-1.800 0-2.900 1-2.900 2.900v1.5h-1.900v2.200h1.900v5.5z" fill="#fff"/>
<path d="M42 5.5c-.6.3-1.200.5-1.900.6c.7-.4 1.200-1 1.400-1.800c-.6.400-1.3.6-2 .8c-.6-.7-1.5-1.100-2.400-1.100c-1.800 0-3.3 1.5-3.3 3.3c0 .3 0 .5.100.7c-2.700-.1-5.200-1.400-6.800-3.400c-.3.5-.4 1-.4 1.600c0 1.100.6 2.100 1.5 2.700c-.5 0-1-.2-1.5-.4c0 1.600 1.100 2.900 2.600 3.200c-.5.100-1 .2-1.5.1c.4 1.3 1.600 2.3 3.100 2.3c-1.3 1.100-3 1.600-4.900 1.400c1.5.9 3.200 1.5 5.100 1.5c6.100 0 9.400-5 9.400-9.400v-.4c.6-.5 1.200-1.100 1.400-1.700z" fill="#2ea0e8"/>
<g fill="#b0b0b0"><rect x="72" y="17" width="2" height="2"/><rect x="68" y="17" width="2" height="2"/><rect x="72" y="13" width="2" height="2"/><rect x="64" y="17" width="2" height="2"/><rect x="68" y="13" width="2" height="2"/><rect x="72" y="9" width="2" height="2"/></g></svg>
</div>
</body>
</html>
